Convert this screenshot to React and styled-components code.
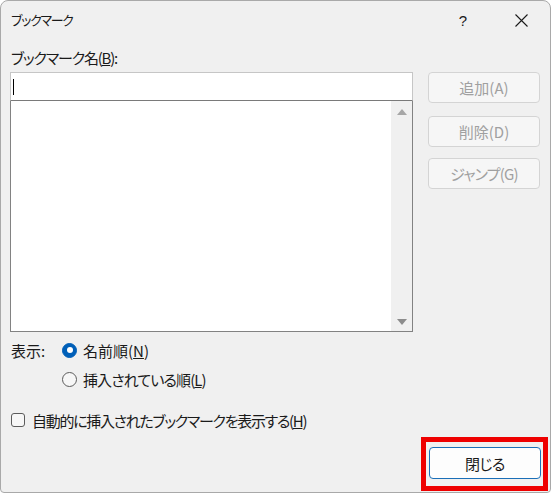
import React from "react";
import styled, { createGlobalStyle } from "styled-components";

const GlobalStyle = createGlobalStyle`
  html, body {
    margin: 0;
    padding: 0;
    background: #ffffff;
  }
  * {
    box-sizing: border-box;
  }
`;

const Window = styled.div`
  width: 551px;
  height: 493px;
  background: #f0f0f0;
  border: 1px solid #a9a9a9;
  border-radius: 8px 8px 4px 4px;
  display: flex;
  flex-direction: column;
  overflow: hidden;
  font-family: "Noto Sans CJK JP", "Noto Sans", sans-serif;
  font-feature-settings: "palt";
  color: #1a1a1a;
`;

const TitleBar = styled.div`
  height: 38px;
  display: flex;
  align-items: center;
  padding-left: 10px;
`;

const Title = styled.div`
  flex: 1;
  font-size: 13px;
  letter-spacing: -1.3px;
  line-height: 20px;
`;

const TitleButton = styled.div`
  width: 58px;
  height: 38px;
  display: flex;
  align-items: center;
  justify-content: center;
  font-size: 15px;
  font-family: "Liberation Sans", sans-serif;
  color: #1a1a1a;
`;

const Body = styled.div`
  padding: 9px 10px 0 9px;
  display: flex;
  flex-direction: column;
`;

const Label = styled.div`
  font-size: 15px;
  line-height: 20px;
  padding-left: 1px;
  letter-spacing: -1.2px;
`;

const Main = styled.div`
  margin-top: 4px;
  display: grid;
  grid-template-columns: 403px 112px;
  column-gap: 15px;
`;

const LeftColumn = styled.div`
  display: flex;
  flex-direction: column;
`;

const NameInput = styled.div`
  height: 29px;
  background: #ffffff;
  border: 1px solid #c6c6c6;
  border-bottom-color: #7a7a7a;
  display: flex;
  align-items: center;
  padding-left: 2px;
`;

const Caret = styled.div`
  width: 1px;
  height: 16px;
  background: #000000;
`;

const ListBox = styled.div`
  height: 231px;
  background: #ffffff;
  border: 1px solid #828282;
  border-top: none;
  display: flex;
  justify-content: flex-end;
`;

const ScrollTrack = styled.div`
  width: 21px;
  background: #f0f0f0;
  display: flex;
  flex-direction: column;
  justify-content: space-between;
  align-items: center;
  padding: 8px 0 6px;
`;

const Arrow = styled.div`
  width: 0;
  height: 0;
  border-left: 5px solid transparent;
  border-right: 5px solid transparent;
  ${(p) =>
    p.down
      ? "border-top: 6px solid #8c8c8c;"
      : "border-bottom: 6px solid #a6a6a6;"}
`;

const ButtonColumn = styled.div`
  display: flex;
  flex-direction: column;
  gap: 13px;
`;

const SideButton = styled.div`
  height: 31px;
  border: 1px solid #d4d4d4;
  border-radius: 4px;
  background: #f6f6f6;
  color: #a0a0a0;
  font-size: 15px;
  display: flex;
  align-items: center;
  justify-content: center;
  letter-spacing: ${(p) => p.spacing || 0}px;
  margin-top: ${(p) => p.offset || 0}px;
`;

const Options = styled.div`
  margin-top: 6px;
  display: flex;
  flex-direction: column;
  gap: 5px;
`;

const OptionRow = styled.div`
  height: 24px;
  display: flex;
  align-items: center;
  font-size: 15px;
  padding-left: ${(p) => p.indent || 1}px;
  letter-spacing: ${(p) => p.spacing || 0}px;
`;

const ShowLabel = styled.span`
  width: 51px;
`;

const Radio = styled.span`
  width: 15px;
  height: 15px;
  flex-shrink: 0;
  border-radius: 50%;
  margin-right: 6px;
  display: flex;
  align-items: center;
  justify-content: center;
  background: ${(p) => (p.checked ? "#005fb8" : "#f7f7f7")};
  border: 1px solid ${(p) => (p.checked ? "#005fb8" : "#5c5c5c")};
  &::after {
    content: "";
    width: 6px;
    height: 6px;
    border-radius: 50%;
    background: #ffffff;
    display: ${(p) => (p.checked ? "block" : "none")};
  }
`;

const CheckRow = styled.div`
  margin-top: 17px;
  height: 24px;
  display: flex;
  align-items: center;
  font-size: 15px;
  padding-left: 1px;
  letter-spacing: -1.3px;
`;

const Checkbox = styled.span`
  width: 14px;
  height: 14px;
  flex-shrink: 0;
  border: 1px solid #5c5c5c;
  border-radius: 3px;
  background: #f7f7f7;
  margin-right: 7px;
`;

const Footer = styled.div`
  margin-top: 5px;
  display: flex;
  justify-content: flex-end;
  padding-right: 2px;
`;

const Highlight = styled.div`
  border: 5px solid #ee0000;
  padding: 5px 2px 7px 3px;
`;

const CloseButton = styled.div`
  width: 112px;
  height: 32px;
  background: #fdfdfd;
  border: 1px solid #1b6fb8;
  border-radius: 4px;
  font-size: 15px;
  letter-spacing: -0.6px;
  display: flex;
  align-items: center;
  justify-content: center;
  color: #1a1a1a;
`;

function CloseIcon() {
  return (
    <svg width="13" height="13" viewBox="0 0 13 13">
      <path d="M0.5 0.5 L12.5 12.5 M12.5 0.5 L0.5 12.5" stroke="#1a1a1a" strokeWidth="1.1" fill="none" />
    </svg>
  );
}

export default function App() {
  return (
    <>
      <GlobalStyle />
      <Window>
        <TitleBar>
          <Title>ブックマーク</Title>
          <TitleButton>?</TitleButton>
          <TitleButton>
            <CloseIcon />
          </TitleButton>
        </TitleBar>
        <Body>
          <Label>
            ブックマーク名(<u>B</u>):
          </Label>
          <Main>
            <LeftColumn>
              <NameInput>
                <Caret />
              </NameInput>
              <ListBox>
                <ScrollTrack>
                  <Arrow />
                  <Arrow down />
                </ScrollTrack>
              </ListBox>
            </LeftColumn>
            <ButtonColumn>
              <SideButton>追加(A)</SideButton>
              <SideButton>削除(D)</SideButton>
              <SideButton offset={-2} spacing={-0.8}>
                ジャンプ(G)
              </SideButton>
            </ButtonColumn>
          </Main>
          <Options>
            <OptionRow>
              <ShowLabel>表示:</ShowLabel>
              <Radio checked />
              名前順(<u>N</u>)
            </OptionRow>
            <OptionRow indent={52} spacing={-0.9}>
              <Radio />
              挿入されている順(<u>L</u>)
            </OptionRow>
          </Options>
          <CheckRow>
            <Checkbox />
            自動的に挿入されたブックマークを表示する(<u>H</u>)
          </CheckRow>
        </Body>
        <Footer>
          <Highlight>
            <CloseButton>閉じる</CloseButton>
          </Highlight>
        </Footer>
      </Window>
    </>
  );
}
